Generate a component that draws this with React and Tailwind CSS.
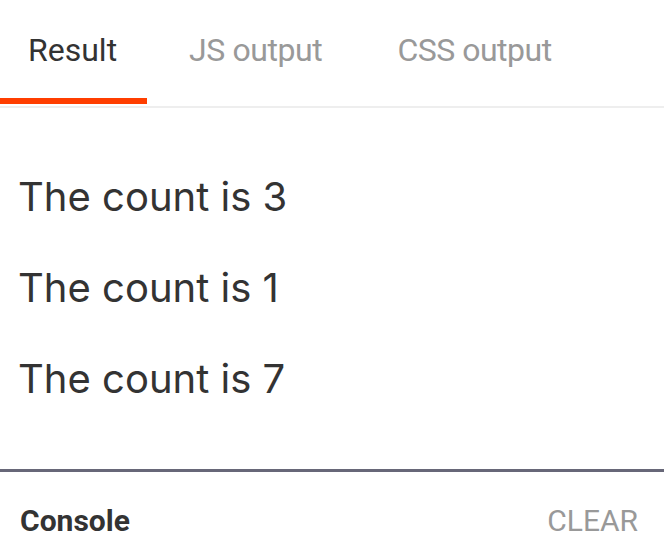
export default function App() {
  const rows = [3, 1, 7];

  return (
    <div className="h-[542px] w-full overflow-hidden bg-white flex flex-col">
      {/* tabs */}
      <div className="flex items-start h-[104px] font-['Roboto',sans-serif] text-[32px] leading-[38px]">
        <div className="h-[104px] w-[147px] pl-[28px] pt-[31px] border-b-[6px] border-[#ff3e00] text-[#333]">
          Result
        </div>
        <div className="ml-[42px] pt-[31px] text-[#999] tracking-[-0.4px]">JS output</div>
        <div className="ml-[75px] pt-[31px] text-[#999] tracking-[-0.5px]">CSS output</div>
      </div>
      <div className="mt-[2px] h-[2px] bg-[#eeeeee]" />

      {/* result */}
      <div className="flex-1 px-[18px] pt-[64px] flex flex-col gap-[42px] font-['Inter',sans-serif] text-[40px] leading-[49px] text-[#333]">
        {rows.map((n, i) => (
          <p key={i}>The count is {n}</p>
        ))}
      </div>

      {/* console */}
      <div className="h-[3px] bg-[#676778]" />
      <div className="h-[70px] flex items-start justify-between pl-[20px] pr-[26px] pt-[31px] font-['Roboto',sans-serif] text-[30px] leading-[35px]">
        <span className="font-bold text-[#333]">Console</span>
        <span className="text-[#999]">CLEAR</span>
      </div>
    </div>
  );
}
